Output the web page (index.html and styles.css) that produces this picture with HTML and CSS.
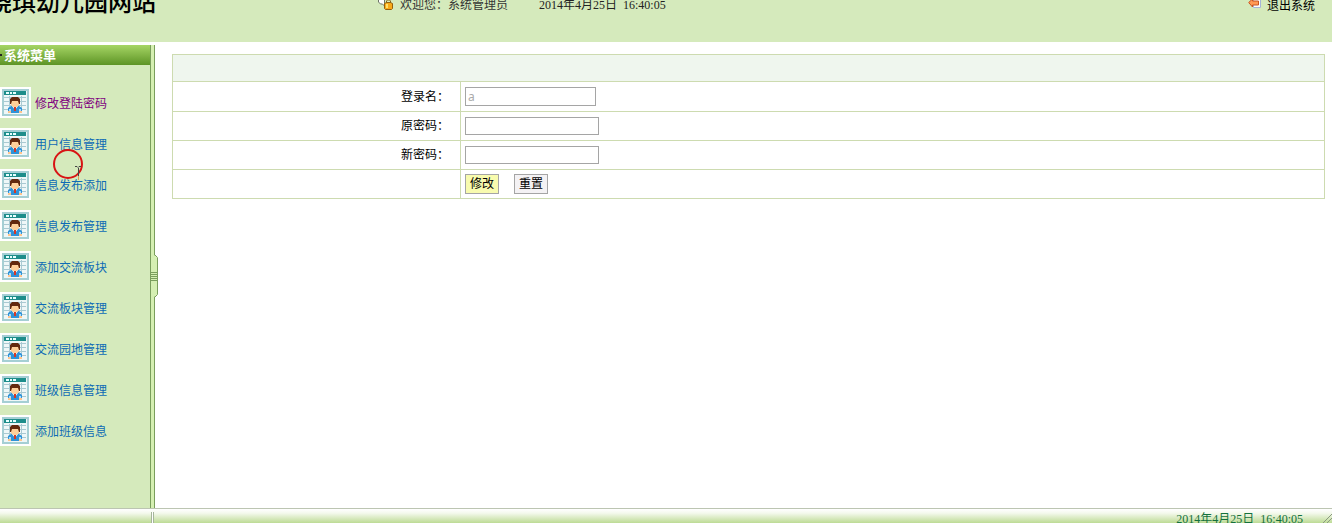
FILE: index.html
```html
<!DOCTYPE html>
<html lang="zh-CN">

<head>
  <meta charset="UTF-8" />
  <meta name="viewport" content="width=device-width, initial-scale=1.0" />
  <title>晓琪幼儿园网站</title>
  <link rel="stylesheet" href="styles.css">
</head>

<body>
  <!-- 菜单图标 -->
  <svg class="defs" aria-hidden="true">
    <symbol id="user" viewBox="0 0 31 31">
      <path fill="#fff" d="M0 0h31v31H0z" />
      <path fill="#a5cfd4" d="M2 2h27v27H2z" />
      <path fill="#eef7f8" d="M4 4h23v23H4z" />
      <path fill="#1d8d8b" d="M4 4h22v4H4z" />
      <path fill="#e6ffff" d="M6 5h3v2H6zM10 5h2v2h-2zM13 5h3v2h-3z" />
      <path stroke="#a9c9d2" d="M4 10.500h22M4 14.500h22M4 18.500h22M4 22.500h22M9.500 9v17M21.500 9v17" />
      <path fill="#2f93d8" d="M8 25v-4l3-2h8l3 2v4l-2 1H10z" />
      <path fill="#a9dcff" d="M9 22h2v2H9zM19 22h2v2h-2z" />
      <path fill="#fff" d="M12 19h6l-3 4z" />
      <path fill="#d33a28" d="M14 20h2v4h-2z" />
      <path fill="#ffd09a" d="M11 14h8v4l-2 2h-4l-2-2z" />
      <path fill="#63290f" d="M10 17v-5l2-2h6l2 2v5h-1l-1-3h-6l-1 3z" />
      <path fill="#ffc58c" d="M8 24h3v2H8zM19 24h3v2h-3z" />
    </symbol>
  </svg>

  <div class="header">
    <h1 class="title">晓琪幼儿园网站</h1>
    <div class="welcome">
      <svg class="lock" viewBox="0 0 16 10" aria-hidden="true">
        <path fill="#fff" stroke="#6c7468" d="M.5 0v2l2 2h2l2 2V0" />
        <path fill="#f8aa18" stroke="#96600c" d="M6.500 3.500l2-1h4l2 1v5l-1 1h-6l-1-1z" />
        <path fill="none" stroke="#85651e" d="M8.500 3V1l1-1h2l1 1v2" />
        <path fill="#ffe06a" d="M8 4h2v4H8z" />
      </svg>
      <span>欢迎您：系统管理员</span>
    </div>
    <div class="time">2014年4月25日&nbsp; 16:40:05</div>
    <a class="logout" href="#">
      <svg class="exit" viewBox="0 0 14 9" aria-hidden="true">
        <path fill="#fafcff" stroke="#a6b4d8" d="M5.500 0v7.500h7V0" />
        <path fill="#ff9a55" stroke="#cc5420" d="M.7 2.500L4.500-1v2h6v4h-6v2z" />
      </svg>
      <span>退出系统</span>
    </a>
  </div>

  <div class="main">
    <div class="sidebar">
      <h2 class="menu-title">系统菜单</h2>
      <ul class="menu">
        <li><a class="visited" href="#"><svg class="icon"><use href="#user" /></svg>修改登陆密码</a></li>
        <li><a href="#"><svg class="icon"><use href="#user" /></svg>用户信息管理</a></li>
        <li><a href="#"><svg class="icon"><use href="#user" /></svg>信息发布添加</a></li>
        <li><a href="#"><svg class="icon"><use href="#user" /></svg>信息发布管理</a></li>
        <li><a href="#"><svg class="icon"><use href="#user" /></svg>添加交流板块</a></li>
        <li><a href="#"><svg class="icon"><use href="#user" /></svg>交流板块管理</a></li>
        <li><a href="#"><svg class="icon"><use href="#user" /></svg>交流园地管理</a></li>
        <li><a href="#"><svg class="icon"><use href="#user" /></svg>班级信息管理</a></li>
        <li><a href="#"><svg class="icon"><use href="#user" /></svg>添加班级信息</a></li>
      </ul>
      <!-- 鼠标 -->
      <svg class="cursor" viewBox="0 0 32 32" aria-hidden="true">
        <circle cx="16" cy="16" r="14" fill="none" stroke="#d81414" stroke-width="2" />
        <path fill="none" stroke="#444" d="M23 18.500h2l1 1 1-1h2M26.500 20v8" />
        <path stroke="#e09a5a" d="M26.500 28v4" />
      </svg>
    </div>
    <div class="split">
      <svg class="handle" viewBox="0 0 8 46" aria-hidden="true">
        <path fill="#d5efb2" d="M1 0h3v2l3 2v38l-3 2v2H1z" />
        <path fill="none" stroke="#7a9e5c" d="M.5 0v46M4.500 0v1.500l3 3v37l-3 3V46" />
        <path stroke="#7a9e5c" d="M1 19.500h6M1 21.500h6M1 23.500h6M1 25.500h6M1 27.500h6" />
      </svg>
    </div>
    <div class="content">
      <form>
        <table class="form-table">
          <tr>
            <th class="head" colspan="2"></th>
          </tr>
          <tr class="first">
            <td class="label"><label for="uname">登录名：</label></td>
            <td><input class="text name" type="text" id="uname" value="a" disabled></td>
          </tr>
          <tr>
            <td class="label"><label for="oldPwd">原密码：</label></td>
            <td><input class="text" type="password" id="oldPwd"></td>
          </tr>
          <tr>
            <td class="label"><label for="newPwd">新密码：</label></td>
            <td><input class="text" type="password" id="newPwd"></td>
          </tr>
          <tr>
            <td class="label"></td>
            <td>
              <div class="btns">
                <button class="btn edit" type="button">修改</button>
                <button class="btn" type="reset">重置</button>
              </div>
            </td>
          </tr>
        </table>
      </form>
    </div>
  </div>

  <div class="footer">
    <div class="grip"></div>
    <div class="footer-time">2014年4月25日&nbsp; 16:40:05</div>
    <svg class="resize" viewBox="0 0 10 10" aria-hidden="true">
      <path stroke="#8a9a80" d="M1 10L10 1M5 10l5-5" />
    </svg>
  </div>
</body>

</html>
```
FILE: styles.css
```css
* {
  margin: 0;
  padding: 0;
  box-sizing: border-box;
}

body {
  display: flex;
  flex-direction: column;
  height: 100vh;
  overflow: hidden;
  background: #fff;
  font: 12px "Liberation Serif", "Noto Sans CJK SC", sans-serif;
  color: #000;
}

ul {
  list-style: none;
}

a {
  text-decoration: none;
}

.defs {
  display: none;
}

/* 头部 */
.header {
  display: grid;
  grid-template-columns: 378px 161px 1fr auto;
  align-items: start;
  flex: none;
  height: 42px;
  padding-right: 17px;
  overflow: hidden;
  background: #d5eabc;
  line-height: 10px;
}

.title {
  margin-left: -12px;
  font-size: 24px;
  font-weight: 500;
  line-height: 6px;
  white-space: nowrap;
}

.welcome,
.logout {
  display: flex;
  color: #333;
}

.lock {
  width: 16px;
  height: 10px;
  margin-right: 6px;
}

.time {
  color: #222;
}

.logout {
  color: #000;
  line-height: 12px;
}

.exit {
  width: 14px;
  height: 9px;
  margin-right: 5px;
}

/* 主体 */
.main {
  display: flex;
  flex: 1;
  min-height: 0;
  margin-top: 3px;
}

.sidebar {
  position: relative;
  flex: none;
  width: 150px;
  background: #d5eabc;
}

.menu-title {
  height: 20px;
  padding-left: 4px;
  background: linear-gradient(#a6d565, #5d9425);
  color: #fff;
  font-size: 13px;
  line-height: 21px;
}

.menu-title::before {
  content: "";
  float: left;
  width: 2px;
  height: 2px;
  margin: 9px 0 0 -4px;
  background: #222;
}

.menu {
  display: flex;
  flex-direction: column;
  gap: 10px;
  padding-top: 22px;
}

.menu a {
  display: flex;
  align-items: center;
  gap: 4px;
  color: #0d6bb5;
}

.menu .visited {
  color: #800080;
}

.icon {
  width: 31px;
  height: 31px;
}

.cursor {
  position: absolute;
  left: 52px;
  top: 103px;
  width: 32px;
  height: 32px;
}

.split {
  position: relative;
  flex: none;
  width: 5px;
  background: #d5efb2;
  border: solid #7a9e5c;
  border-width: 0 1px;
}

.handle {
  position: absolute;
  left: -1px;
  top: calc(50% - 24px);
  width: 8px;
  height: 46px;
}

/* 表单 */
.content {
  flex: 1;
  padding: 9px 7px 0 17px;
}

.form-table {
  width: 100%;
  border-collapse: collapse;
}

.form-table th,
.form-table td {
  height: 29px;
  padding: 0 4px;
  border: 1px solid #cddbb0;
}

.form-table .head {
  height: 27px;
  background: #eff6ee;
}

.form-table .first td {
  height: 30px;
}

.form-table .label {
  width: 25%;
  padding: 0 11px 2px 0;
  text-align: right;
}

.text {
  display: block;
  width: 134px;
  height: 18px;
  padding: 0 2px;
  border: 1px solid #a5a5a5;
  background: #fff;
  font: 12px "Noto Sans", sans-serif;
}

.name {
  width: 131px;
  height: 19px;
  color: #aaa;
}

.btns {
  display: flex;
  gap: 15px;
}

.btn {
  width: 34px;
  height: 20px;
  padding-bottom: 2px;
  border: 1px solid #a5a5a5;
  background: #f4f2f4;
  font: 12px/16px "Noto Sans CJK SC", sans-serif;
  color: #000;
}

.edit {
  background: #f8fbae;
}

/* 底部 */
.footer {
  display: flex;
  flex: none;
  height: 15px;
  overflow: hidden;
  border-top: 1px solid #bcc5b2;
  background: linear-gradient(#fff, #f4f9ec 30%, #bddb95);
  color: #14713c;
  line-height: 20px;
}

.grip {
  width: 3px;
  margin: 3px auto 0 151px;
  border: solid #a5b59a;
  border-width: 0 1px;
  background: #fff;
}

.resize {
  align-self: flex-end;
  width: 10px;
  height: 10px;
  margin-left: 19px;
}
```
